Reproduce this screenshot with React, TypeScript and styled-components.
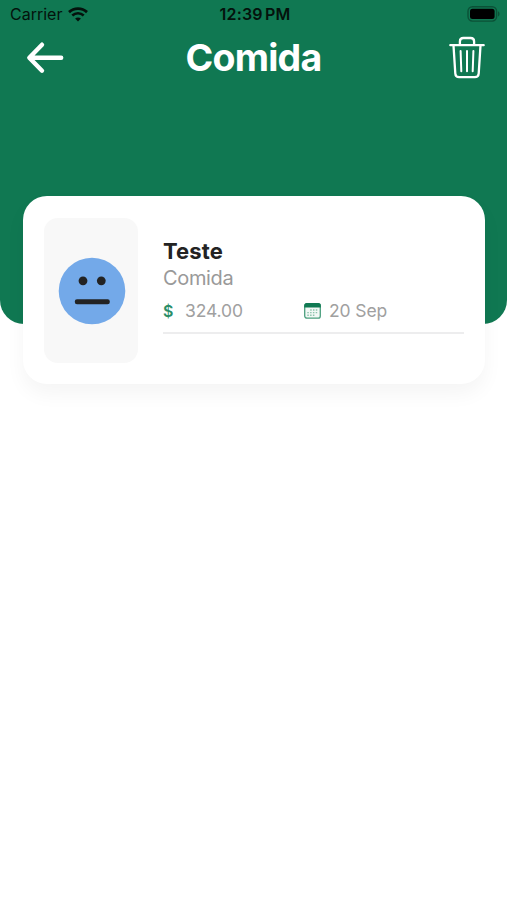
import React from 'react';
import styled, { createGlobalStyle } from 'styled-components';

const Global = createGlobalStyle`
  * { box-sizing: border-box; }
  body { margin: 0; background: #fff; font-family: Inter, "Liberation Sans", sans-serif; }
  svg { display: block; flex: none; }
`;

const Screen = styled.main`
  width: 100%;
  height: 900px;
  overflow: hidden;
  background: #fff;
`;

const Header = styled.header`
  height: 324px;
  background: #107852;
  border-radius: 0 0 24px 24px;
`;

const StatusBar = styled.div`
  display: grid;
  grid-template-columns: 1fr auto 1fr;
  align-items: center;
  height: 28px;
  padding: 0 7px 0 10px;
  color: #04120c;
`;

const Carrier = styled.div`
  display: flex;
  align-items: center;
  gap: 6px;
  font-size: 16px;
  line-height: 20px;
  letter-spacing: 0;
`;

const Clock = styled.time`
  font-size: 16px;
  line-height: 20px;
  font-weight: 600;
  letter-spacing: 0.2px;
  word-spacing: -2px;
`;

const BatterySlot = styled.div`
  display: flex;
  justify-content: flex-end;
`;

const TitleBar = styled.div`
  display: grid;
  grid-template-columns: 40px 1fr 40px;
  align-items: center;
  height: 60px;
  padding: 0 20px 0 25px;
`;

const Title = styled.h1`
  margin: 0 5px 0 0;
  text-align: center;
  font-size: 37.5px;
  line-height: 46px;
  font-weight: 700;
  letter-spacing: -0.75px;
  color: #fff;
`;

const IconButton = styled.button`
  display: flex;
  width: 40px;
  height: 46px;
  padding: 0;
  border: 0;
  background: none;
  align-items: center;
  justify-content: center;
`;

const Card = styled.article`
  position: relative;
  display: flex;
  gap: 25px;
  height: 188px;
  margin: -128px 22px 0 23px;
  padding: 22px 21px 21px;
  background: #fff;
  border-radius: 24px;
  box-shadow: 0 10px 20px rgba(0, 0, 0, 0.045);
`;

const MoodPanel = styled.div`
  display: flex;
  align-items: center;
  justify-content: center;
  flex: none;
  width: 94px;
  height: 145px;
  padding-left: 1px;
  background: #f8f8f8;
  border-radius: 14px;
`;

const Details = styled.div`
  flex: 1;
  height: 96px;
  margin-top: 20px;
  border-bottom: 2px solid #ededee;
`;

const Name = styled.h2`
  margin: 0;
  font-size: 22px;
  line-height: 26px;
  font-weight: 700;
  letter-spacing: 0.1px;
  color: #232323;
`;

const Category = styled.p`
  margin: 1px 0 0;
  font-size: 20px;
  line-height: 26px;
  letter-spacing: -0.35px;
  color: #999;
`;

const Meta = styled.div`
  display: grid;
  grid-template-columns: 141px 1fr;
  margin-top: 9px;
`;

const MetaItem = styled.div<{ $gap: number }>`
  display: flex;
  align-items: center;
  gap: ${({ $gap }) => $gap}px;
  font-size: 17.5px;
  line-height: 22px;
  letter-spacing: -0.1px;
  color: #a0a0a0;
`;

const Currency = styled.span`
  width: 11px;
  font-size: 16px;
  font-weight: 600;
  color: #2b8e68;
`;

const WifiIcon = () => (
  <svg width="20" height="15" viewBox="0 0 20 15" fill="none" stroke="#04120c">
    <path d="M1 5.1C6 .5 14 .5 19 5.1" strokeWidth="2.8" />
    <path d="M4.3 8.5c3.2-3 8.2-3 11.4 0" strokeWidth="2.6" />
    <path d="M10 14.4 7.1 11.5c1.6-1.5 4.2-1.5 5.8 0z" fill="#04120c" stroke="none" />
  </svg>
);

const BatteryIcon = () => (
  <svg width="33" height="16" viewBox="0 0 33 16">
    <rect x="1" y=".7" width="28.6" height="14.4" rx="4.5" fill="none" stroke="#0b5137" strokeWidth="1.4" />
    <rect x="3" y="2.7" width="24.6" height="10.4" rx="2.5" fill="#000" />
    <path d="M31 5.3c2 .7 2 4.5 0 5.2z" fill="#0b5137" />
  </svg>
);

const BackIcon = () => (
  <svg width="40" height="34" viewBox="0 0 40 34" fill="none" stroke="#fff" strokeWidth="4.4" strokeLinecap="round" strokeLinejoin="round">
    <path d="M17 3.7 4.3 16.7l12.7 13M4.8 16.7H36.2" />
  </svg>
);

const TrashIcon = () => (
  <svg width="38" height="44" viewBox="0 0 38 44" fill="none" stroke="#fff" strokeWidth="2.3" strokeLinecap="round" strokeLinejoin="round">
    <path d="M2.3 9.2h33.4M11.9 9V5.5q0-3.5 3.5-3.5h7.2q3.5 0 3.5 3.5V9M5.5 9.5l1.8 28q.2 3.6 3.8 3.6h15.8q3.6 0 3.8-3.6l1.8-28" />
    <path d="m12.6 15 .7 20.3M19 15v20.3M25.4 15l-.7 20.3" strokeWidth="2" />
  </svg>
);

const NeutralFace = () => (
  <svg width="68" height="68" viewBox="0 0 68 68">
    <circle cx="34" cy="34" r="33.3" fill="#73a9e9" />
    <circle cx="25" cy="23.8" r="4.4" fill="#232323" />
    <circle cx="43.3" cy="23.8" r="4.4" fill="#232323" />
    <rect x="16.8" y="42.2" width="35" height="5" rx="2.2" fill="#232323" />
  </svg>
);

const CalendarIcon = () => (
  <svg width="17" height="16" viewBox="0 0 17 16">
    <rect x=".7" y=".7" width="15.6" height="14.4" rx="2.2" fill="#f2f8f5" stroke="#4b9f7e" strokeWidth="1.3" />
    <path d="M.2 4.4V2.8Q.2.1 2.9.1h11.2q2.7 0 2.7 2.7v1.6z" fill="#107a53" />
    <path d="M6.2 7h7.8M3.3 9.6h10.7M3.3 12.2h7.8" stroke="#8dc3ac" strokeWidth="1.4" strokeDasharray="1.5 1.3" />
  </svg>
);

export default function App() {
  return (
    <Screen>
      <Global />
      <Header>
        <StatusBar>
          <Carrier>Carrier <WifiIcon /></Carrier>
          <Clock>12:39 PM</Clock>
          <BatterySlot><BatteryIcon /></BatterySlot>
        </StatusBar>
        <TitleBar>
          <IconButton aria-label="Back"><BackIcon /></IconButton>
          <Title>Comida</Title>
          <IconButton aria-label="Delete"><TrashIcon /></IconButton>
        </TitleBar>
      </Header>
      <Card>
        <MoodPanel><NeutralFace /></MoodPanel>
        <Details>
          <Name>Teste</Name>
          <Category>Comida</Category>
          <Meta>
            <MetaItem $gap={11}><Currency>$</Currency>324.00</MetaItem>
            <MetaItem $gap={8}><CalendarIcon />20 Sep</MetaItem>
          </Meta>
        </Details>
      </Card>
    </Screen>
  );
}
